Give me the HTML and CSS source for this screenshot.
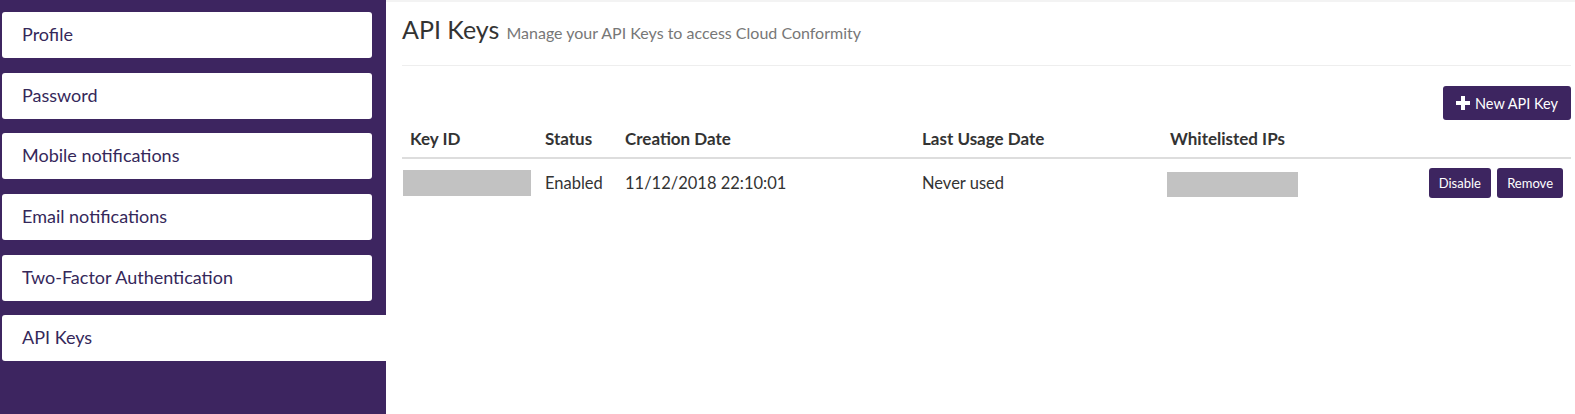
FILE: index.html
```html
<!DOCTYPE html>
<html lang="en">
  <head>
    <meta charset="UTF-8" />
    <title>API Keys</title>
    <link rel="stylesheet" href="styles.css">
  </head>
  <body>
    <div class="sidebar">
      <a class="nav-item" href="#">Profile</a>
      <a class="nav-item" href="#">Password</a>
      <a class="nav-item" href="#">Mobile notifications</a>
      <a class="nav-item" href="#">Email notifications</a>
      <a class="nav-item" href="#">Two-Factor Authentication</a>
      <a class="nav-item active" href="#">API Keys</a>
    </div>

    <div class="main">
      <div class="page-header">
        <h1>API Keys</h1>
        <span class="subtitle">Manage your API Keys to access Cloud Conformity</span>
      </div>

      <div class="toolbar">
        <button class="btn btn-new">
          <svg width="14" height="14" viewBox="0 0 14 14">
            <rect x="5" y="0" width="4" height="14" fill="#fff" />
            <rect x="0" y="5" width="14" height="4" fill="#fff" />
          </svg>
          New API Key
        </button>
      </div>

      <table class="keys">
        <thead>
          <tr>
            <th class="col-id">Key ID</th>
            <th class="col-status">Status</th>
            <th class="col-created">Creation Date</th>
            <th class="col-used">Last Usage Date</th>
            <th class="col-ips">Whitelisted IPs</th>
            <th></th>
          </tr>
        </thead>
        <tbody>
          <tr>
            <td class="cell-id"><span class="redacted"></span></td>
            <td>Enabled</td>
            <td>11/12/2018 22:10:01</td>
            <td>Never used</td>
            <td class="cell-ips"><span class="redacted ips"></span></td>
            <td class="actions">
              <button class="btn btn-sm">Disable</button>
              <button class="btn btn-sm">Remove</button>
            </td>
          </tr>
        </tbody>
      </table>
    </div>
  </body>
</html>
```

FILE: styles.css
```css
body {
  margin: 0;
  display: flex;
  min-height: 414px;
  font-family: Lato, "Open Sans", sans-serif;
  color: #333;
  background: #fff;
}

/* sidebar */
.sidebar {
  width: 386px;
  flex-shrink: 0;
  background: #3d2560;
  padding-top: 12px;
  box-sizing: border-box;
}

.nav-item {
  display: block;
  width: 370px;
  height: 46px;
  line-height: 44px;
  margin: 0 0 14.7px 2px;
  padding-left: 20px;
  box-sizing: border-box;
  background: #fff;
  border-radius: 3px;
  color: #35285a;
  font-size: 18px;
  text-decoration: none;
}

.nav-item.active {
  width: 384px;
  border-radius: 3px 0 0 3px;
}

/* main */
.main {
  flex: 1;
  padding: 0 4px 0 16px;
  border-top: 2px solid #f3f3f3;
  box-sizing: border-box;
}

.page-header {
  padding-top: 12px;
  line-height: 30px;
  padding-bottom: 17px;
  border-bottom: 1px solid #eee;
}

.page-header h1 {
  display: inline;
  margin: 0;
  font-size: 25px;
  font-weight: normal;
  color: #333;
}

.subtitle {
  margin-left: 3px;
  font-size: 16px;
  color: #777;
}

.toolbar {
  display: flex;
  justify-content: flex-end;
  margin-top: 20px;
}

.btn {
  border: none;
  border-radius: 3px;
  background: #3d2560;
  color: #fff;
  font-family: Lato, "Open Sans", sans-serif;
  cursor: pointer;
}

.btn-new {
  display: flex;
  align-items: center;
  gap: 5px;
  height: 34px;
  padding: 0 13px;
  font-size: 14.5px;
}

.btn-sm {
  height: 30px;
  padding: 0 10px;
  font-size: 13px;
  margin-left: 2px;
}

/* table */
.keys {
  width: 100%;
  border-collapse: collapse;
  table-layout: fixed;
  font-size: 16.5px;
}

.keys th {
  box-sizing: border-box;
  height: 38px;
  padding: 0 8px;
  text-align: left;
  font-size: 17px;
  font-weight: bold;
  border-bottom: 2px solid #ddd;
}

.keys td {
  height: 48px;
  padding: 0 8px;
  vertical-align: middle;
}

.col-id { width: 135px; }
.col-status { width: 80px; }
.col-created { width: 297px; }
.col-used { width: 248px; }
.col-ips { width: 138px; }

.keys td.cell-id {
  padding-left: 1px;
}

.keys td.cell-ips {
  padding-left: 5px;
}

.redacted {
  display: block;
  width: 128px;
  height: 26px;
  background: #c2c2c2;
}

.redacted.ips {
  width: 131px;
  height: 25px;
  margin-top: 3px;
}

.actions {
  text-align: right;
}
```
